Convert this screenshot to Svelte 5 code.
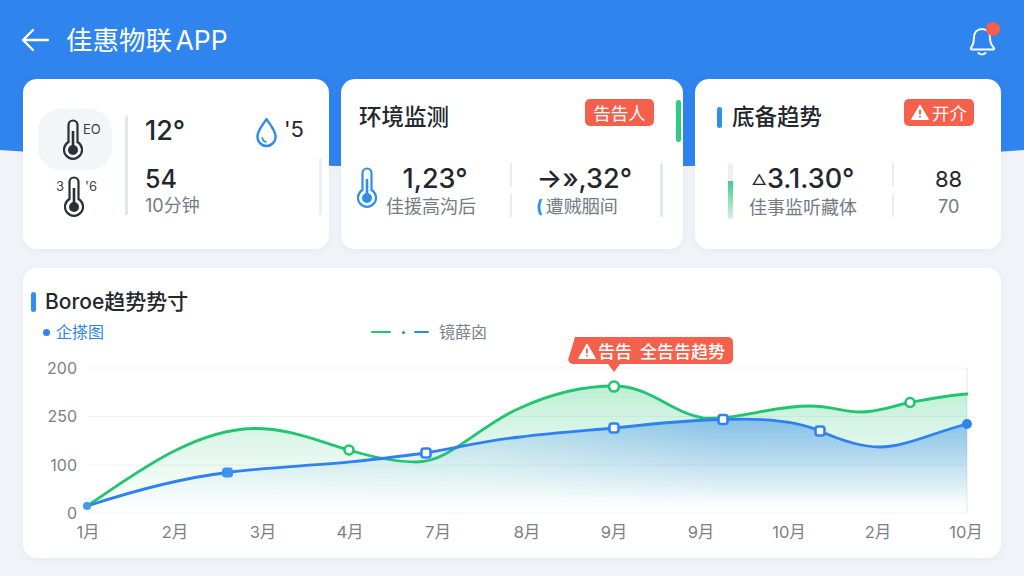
<script>
  const xLabels = [
    ["1月", 88], ["2月", 175], ["3月", 263], ["4月", 350], ["7月", 438], ["8月", 527],
    ["9月", 614], ["9月", 701], ["10月", 789], ["2月", 878], ["10月", 966]
  ];
  const yLabels = [["200", 368], ["250", 416.5], ["100", 465], ["0", 513]];

  const greenLine = "M87 506C130 478 190 430 253 428.5C290 428 320 442 349 450C375 458 395 462 417 462C450 462 480 425 520 408C555 392 585 386 614 386C650 386 670 412 703 418C740 420 770 406 810 406C830 406 845 412 860 412C880 412 895 405 910 402.5C930 399 950 395 967 394";
  const blueLine = "M87 506C130 492 180 478 228 472.5C270 467 310 466 353 461.7C380 459 400 456 426 453C460 447 490 440 520 437C550 433 580 431 614 428C650 424 690 420 723 419.5C760 418 795 420 820 431C840 440 860 447 880 447C905 447 935 432 967 424";

  const greenMarks = [[349, 450, 4.5], [614, 386.5, 5], [910, 402.5, 4.5]];
  const blueMarks = [[426, 453], [614, 428], [723, 419.5], [820, 431]];
</script>

{#snippet thermo(color)}
  <svg class="thermo" viewBox="0 0 20 42">
    <path d="M5.5 24V7a4.5 4.5 0 0 1 9 0V24a9 9 0 1 1-9 0Z" fill="none" stroke={color} stroke-width="2.2" />
    <path d="M10 13V30" stroke={color} stroke-width="2.6" />
    <circle cx="10" cy="32" r="5" fill={color} />
  </svg>
{/snippet}

{#snippet warn()}
  <svg class="warn" viewBox="0 0 18 16">
    <path d="M9 1L17.5 15.5H.5Z" fill="#fff" stroke="#fff" stroke-linejoin="round" />
    <path d="M9 5.5V10.5M9 12V13.6" stroke="#f4604c" stroke-width="1.8" />
  </svg>
{/snippet}

<svg class="wave" viewBox="0 0 1024 170" preserveAspectRatio="none">
  <path d="M0 0H1024V150Q512 186 0 150Z" fill="#2f84ee" />
</svg>

<div class="page">
  <header>
    <div class="head-left">
      <svg class="back" viewBox="0 0 28 24">
        <path d="M27 12H2M12 2L2 12L12 22" fill="none" stroke="#fff" stroke-width="2.3" stroke-linecap="round" stroke-linejoin="round" />
      </svg>
      <h1>佳惠物联 APP</h1>
    </div>
    <div class="bell">
      <svg viewBox="0 0 28 32">
        <path d="M3 24C5 21 6 19 6 14C6 8 9.500 5 14 5C18.500 5 22 8 22 14C22 19 23 21 26 24C26.500 25 26 25.500 25 25.500H4C3 25.500 2.500 25 3 24Z" fill="none" stroke="#fff" stroke-width="2" stroke-linejoin="round" />
        <path d="M10.500 29C12.500 30.800 15.500 30.800 17.500 29" fill="none" stroke="#fff" stroke-width="2" stroke-linecap="round" />
      </svg>
      <span class="dot"></span>
    </div>
  </header>

  <section class="cards">
    <div class="card one">
      <div class="icons">
        <div class="icon-box">
          {@render thermo("#2b2f36")}
          <span class="tiny">EO</span>
        </div>
        <div class="icon-plain">
          <span class="tiny">3</span>
          {@render thermo("#2b2f36")}
          <span class="tiny">'6</span>
        </div>
      </div>
      <div class="divider tall"></div>
      <div class="readings">
        <div class="top-row">
          <span class="big">12°</span>
          <div class="drop">
            <svg viewBox="0 0 24 32">
              <path d="M12 2C8 8 2.500 14 2.500 20.500A9.500 9.500 0 0 0 21.500 20.500C21.500 14 16 8 12 2Z" fill="none" stroke="#2f8fe8" stroke-width="2.600" stroke-linejoin="round" />
              <path d="M7.500 21.500C8 24 9.500 25.500 11.500 26" fill="none" stroke="#2f8fe8" stroke-width="1.600" stroke-linecap="round" />
            </svg>
            <span class="drop-val">'5</span>
          </div>
        </div>
        <div class="mid">54</div>
        <div class="sub">10分钟</div>
      </div>
      <div class="divider short"></div>
    </div>

    <div class="card two">
      <div class="card-head">
        <h2>环境监测</h2>
        <span class="badge">告告人</span>
        <span class="green-bar"></span>
      </div>
      <div class="stats">
        <div class="therm-blue">{@render thermo("#2f8fe8")}</div>
        <div class="stat first">
          <div class="big">1,23°</div>
          <div class="sub">佳援高沟后</div>
        </div>
        <div class="broken"></div>
        <div class="stat second">
          <div class="big">→»,32°</div>
          <div class="sub"><span class="paren">(</span>遭贼胭间</div>
        </div>
        <div class="divider end"></div>
      </div>
    </div>

    <div class="card three">
      <div class="card-head">
        <span class="mark"></span>
        <h2>底备趋势</h2>
        <span class="badge">{@render warn()}开介</span>
      </div>
      <div class="stats">
        <div class="gauge"><span></span></div>
        <div class="stat third">
          <div class="big"><small>△</small>3.1.30°</div>
          <div class="sub">佳事监听藏体</div>
        </div>
        <div class="broken"></div>
        <div class="stat fourth">
          <div class="num">88</div>
          <div class="sub">70</div>
        </div>
      </div>
    </div>
  </section>

  <section class="chart-card">
    <div class="chart-title"><span class="mark"></span><h2>Boroe趋势势寸</h2></div>
    <div class="legend">
      <div class="legend-a"><span class="legend-dot"></span>企搽图</div>
      <div class="legend-b">
        <span class="seg green"></span><span class="pip"></span><span class="seg blue"></span>
        <span class="legend-text">镜薛囟</span>
      </div>
    </div>

    <div class="plot">
      <svg class="chart" viewBox="23 340 978 210">
        <defs>
          <linearGradient id="gFill" x1="0" y1="386" x2="0" y2="513" gradientUnits="userSpaceOnUse">
            <stop offset="0" stop-color="#2ecb7a" stop-opacity="0.32" />
            <stop offset="0.55" stop-color="#7fdcae" stop-opacity="0.2" />
            <stop offset="1" stop-color="#7fdcae" stop-opacity="0" />
          </linearGradient>
          <linearGradient id="bFill" x1="0" y1="420" x2="0" y2="505" gradientUnits="userSpaceOnUse">
            <stop offset="0" stop-color="#2f84ee" stop-opacity="0.46" />
            <stop offset="1" stop-color="#2f84ee" stop-opacity="0" />
          </linearGradient>
          <linearGradient id="fadeX" x1="87" y1="0" x2="967" y2="0" gradientUnits="userSpaceOnUse">
            <stop offset="0" stop-color="#fff" stop-opacity="0.3" />
            <stop offset="0.45" stop-color="#fff" stop-opacity="0.45" />
            <stop offset="0.72" stop-color="#fff" stop-opacity="1" />
          </linearGradient>
          <mask id="blueMask" maskUnits="userSpaceOnUse" x="23" y="340" width="978" height="210">
            <rect x="23" y="340" width="978" height="210" fill="url(#fadeX)" />
          </mask>
        </defs>

        {#each [368, 416.5, 465, 513] as y}
          <line x1="88" x2="967" y1={y} y2={y} stroke="#f0f2f5" />
        {/each}
        <line x1="967" x2="967" y1="368" y2="513" stroke="#e3e7ed" />

        <path d="{greenLine}V513H87Z" fill="url(#gFill)" />
        <path d="{blueLine}V513H87Z" fill="url(#bFill)" mask="url(#blueMask)" />
        <path d={greenLine} fill="none" stroke="#22c56f" stroke-width="2.800" stroke-linecap="round" />
        <path d={blueLine} fill="none" stroke="#2f80f0" stroke-width="2.800" stroke-linecap="round" />

        {#each greenMarks as [x, y, r]}
          <circle cx={x} cy={y} {r} fill="#fff" stroke="#22c56f" stroke-width="2.600" />
        {/each}
        {#each blueMarks as [x, y]}
          <rect x={x - 4.500} y={y - 4.500} width="9" height="9" rx="2.500" fill="#fff" stroke="#2f84f0" stroke-width="2.600" />
        {/each}
        <circle cx="87" cy="506" r="4" fill="#3a9bf0" />
        <rect x="222" y="467.500" width="11" height="10" rx="3.500" fill="#3d92f2" />
        <circle cx="967" cy="424" r="5" fill="#2f84ee" />

        {#each yLabels as [t, y]}
          <text class="axis y" x="77" y={y + 5.500} text-anchor="end">{t}</text>
        {/each}
        {#each xLabels as [t, x]}
          <text class="axis" {x} y="538" text-anchor="middle">{t}</text>
        {/each}
      </svg>

      <div class="tip">{@render warn()}<span>告告</span><span>全告告趋势</span></div>
      <div class="tip-arrow"></div>
    </div>
  </section>
</div>

<style>
  :global(body) {
    background: #f0f3f7;
    overflow: hidden;
  }
  .wave {
    position: absolute;
    top: 0;
    left: 0;
    width: 1024px;
    height: 170px;
  }
  .page {
    position: relative;
    width: 1024px;
    height: 576px;
    font-family: Inter, "Noto Sans CJK SC", sans-serif;
    color: #23272e;
  }
  header {
    height: 79px;
    padding: 0 28px 0 21px;
    box-sizing: border-box;
    display: flex;
    align-items: center;
    justify-content: space-between;
  }
  .head-left {
    display: flex;
    align-items: center;
    gap: 17px;
  }
  .back {
    width: 28px;
    height: 24px;
  }
  h1 {
    margin: 0;
    color: #fff;
    font-size: 26.500px;
    font-weight: 400;
    line-height: 30px;
    word-spacing: -4px;
  }
  h2 {
    margin: 0;
    font-size: 22.500px;
    font-weight: 500;
    line-height: 28px;
  }
  .bell {
    position: relative;
    width: 28px;
    height: 32px;
  }
  .bell svg {
    width: 28px;
    height: 32px;
  }
  .dot {
    position: absolute;
    top: -2px;
    right: -4px;
    width: 14px;
    height: 14px;
    border-radius: 50%;
    background: #f4604c;
  }
  .cards {
    display: grid;
    grid-template-columns: 306px 342px 306px;
    gap: 12px;
    padding: 0 23px;
  }
  .card {
    height: 170px;
    box-sizing: border-box;
    background: #fff;
    border-radius: 14px;
    box-shadow: 0 2px 8px rgba(60, 80, 110, 0.05);
  }
  .one {
    display: flex;
    padding: 30px 7px 0 15px;
  }
  .icons {
    width: 74px;
  }
  .icon-box {
    height: 61px;
    border-radius: 22px;
    background: #f3f5f8;
    display: flex;
    justify-content: center;
    padding: 9px 0 0 12px;
    box-sizing: border-box;
  }
  .icon-plain {
    margin-top: 5px;
    display: flex;
    justify-content: center;
    padding-left: 7px;
    gap: 1px;
  }
  .thermo {
    width: 20px;
    height: 42px;
    flex: none;
  }
  .tiny {
    font-size: 13px;
    line-height: 14px;
    margin-top: 4px;
    color: #3a3f47;
    width: 16px;
  }
  .icon-plain .tiny:first-child {
    text-align: right;
    width: 7px;
  }
  .divider {
    background: #e4e8ed;
    border-radius: 2px;
    width: 3px;
    flex: none;
  }
  .tall {
    height: 100px;
    margin: 6px 0 0 13px;
  }
  .short {
    height: 57px;
    margin-top: 49px;
    background: #eef1f4;
  }
  .readings {
    flex: 1;
    padding: 5px 0 0 17px;
  }
  .top-row {
    display: flex;
    justify-content: space-between;
    height: 50px;
    padding-right: 15px;
  }
  .big {
    font-size: 27px;
    line-height: 34px;
    font-weight: 500;
    white-space: nowrap;
  }
  .drop {
    display: flex;
    gap: 6px;
    margin-top: 2px;
  }
  .drop svg {
    width: 23px;
    height: 31px;
    margin-top: 1px;
  }
  .drop-val {
    font-size: 22px;
    line-height: 26px;
  }
  .mid {
    font-size: 25px;
    line-height: 30px;
    font-weight: 500;
  }
  .sub {
    font-size: 18px;
    line-height: 23px;
    color: #727a86;
    white-space: nowrap;
  }
  .card-head {
    display: flex;
    align-items: center;
    height: 28px;
  }
  .badge {
    display: flex;
    align-items: center;
    justify-content: center;
    gap: 3px;
    width: 69px;
    height: 27px;
    border-radius: 5px;
    background: #f4604c;
    color: #fff;
    font-size: 17.500px;
    margin-top: -10px;
  }
  .warn {
    width: 18px;
    height: 16px;
    flex: none;
  }
  .two {
    padding: 24px 20px 0 18px;
  }
  .two .badge {
    margin-left: auto;
  }
  .green-bar {
    width: 5px;
    height: 42px;
    border-radius: 3px;
    background: #2ecc7f;
    margin: 8px -18px 0 22px;
    flex: none;
  }
  .stats {
    display: flex;
    margin-top: 32px;
  }
  .therm-blue {
    width: 21px;
    margin: 3px 0 0 -2px;
    flex: none;
  }
  .stat {
    text-align: center;
    flex: none;
  }
  .first {
    width: 90px;
    margin-left: 8px;
  }
  .first .big {
    padding-left: 8px;
  }
  .second {
    width: 96px;
    margin-left: 24px;
  }
  .second .big {
    text-align: right;
  }
  .second .sub {
    text-align: left;
  }
  .paren {
    color: #2f8fe8;
    font-weight: 700;
    margin-right: 3px;
  }
  .stat .big {
    line-height: 32px;
  }
  .broken {
    width: 2px;
    height: 54px;
    flex: none;
    margin-left: 34px;
    background: linear-gradient(#e8ebef 0 24px, transparent 24px 31px, #e8ebef 31px);
  }
  .end {
    height: 54px;
    margin-left: 28px;
  }
  .three {
    padding: 24px 27px 0 22px;
  }
  .mark {
    width: 5px;
    height: 21px;
    border-radius: 3px;
    background: #2f8ff0;
    flex: none;
    margin-right: 10px;
  }
  .three .badge {
    margin-left: auto;
    width: 70px;
  }
  .gauge {
    width: 5px;
    height: 56px;
    border-radius: 3px;
    background: #eceff3;
    margin: 0 0 0 11px;
    position: relative;
    overflow: hidden;
    flex: none;
  }
  .gauge span {
    position: absolute;
    left: 0;
    right: 0;
    top: 18px;
    bottom: 0;
    background: linear-gradient(#45c98d, #d4f2e4);
  }
  .third {
    width: 112px;
    margin-left: 14px;
  }
  .third small {
    font-size: 15px;
    vertical-align: 3px;
  }
  .third + .broken {
    margin-left: 33px;
  }
  .fourth {
    margin-left: 41px;
  }
  .num {
    font-size: 22px;
    line-height: 32px;
  }
  .chart-card {
    margin: 19px 23px 0;
    height: 290px;
    background: #fff;
    border-radius: 14px;
    box-shadow: 0 2px 8px rgba(60, 80, 110, 0.05);
  }
  .chart-title {
    display: flex;
    align-items: center;
    height: 28px;
    padding: 20px 0 0 8px;
  }
  .chart-title h2 {
    font-size: 21px;
  }
  .chart-title .mark {
    margin-right: 9px;
    height: 20px;
  }
  .legend {
    display: flex;
    height: 16px;
    margin-top: 8px;
    font-size: 16px;
    line-height: 16px;
  }
  .legend-a {
    display: flex;
    align-items: center;
    gap: 6px;
    color: #2f84ee;
    padding-left: 20px;
    width: 348px;
    box-sizing: border-box;
  }
  .legend-dot {
    width: 7px;
    height: 7px;
    border-radius: 50%;
    background: #2f84ee;
  }
  .legend-b {
    display: flex;
    align-items: center;
    color: #7c838d;
  }
  .seg {
    height: 2.500px;
    border-radius: 2px;
  }
  .seg.green {
    width: 20px;
    background: #22c56f;
  }
  .seg.blue {
    width: 15px;
    background: #2f84ee;
  }
  .pip {
    width: 3px;
    height: 3px;
    border-radius: 50%;
    margin: 0 9px 0 11px;
    background: #2f84ee;
  }
  .legend-text {
    margin-left: 10px;
  }
  .plot {
    position: relative;
    height: 210px;
  }
  .chart {
    display: block;
    width: 978px;
    height: 210px;
  }
  .axis {
    font-size: 16.500px;
    fill: #7b8088;
  }
  .axis.y {
    font-size: 16px;
  }
  .tip {
    position: absolute;
    left: 545px;
    top: -3px;
    width: 165px;
    height: 27px;
    box-sizing: border-box;
    padding-left: 10px;
    display: flex;
    align-items: center;
    gap: 2px;
    background: #f4604c;
    color: #fff;
    font-size: 17px;
    font-weight: 500;
    white-space: nowrap;
    border-radius: 5px;
    clip-path: polygon(7px 0, 100% 0, 100% 100%, 2px 100%, 0 85%);
  }
  .tip span + span {
    margin-left: 6px;
  }
  .tip-arrow {
    position: absolute;
    left: 585px;
    top: 24px;
    border: 6px solid transparent;
    border-top: 8px solid #f4604c;
    border-bottom: 0;
  }
</style>
